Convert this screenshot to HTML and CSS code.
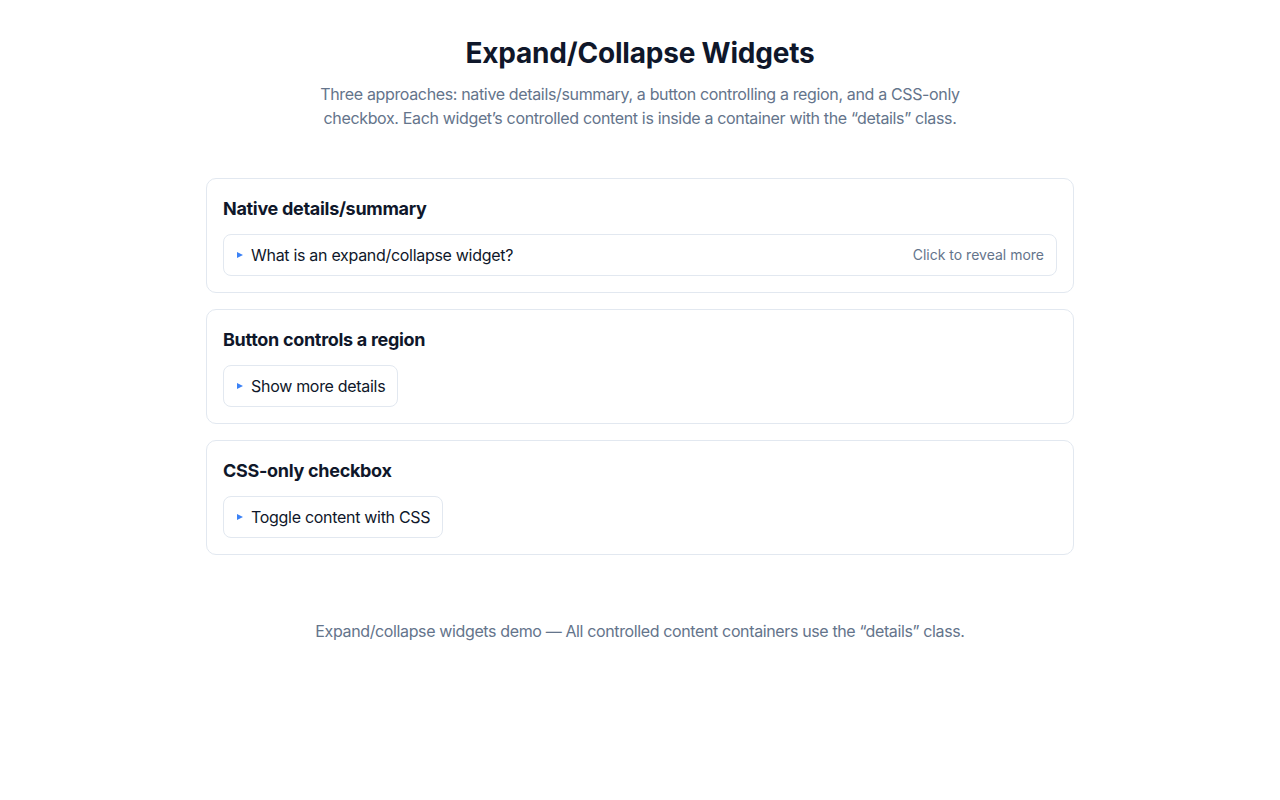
FILE: index.html
```html
<!DOCTYPE html>
<html lang="en">
<head>
<meta charset="utf-8">
<title>Expand/Collapse Widgets</title>
<link rel="stylesheet" href="styles.css">
</head>
<body>
<main class="page">
  <header class="intro">
    <h1 class="title">Expand/Collapse Widgets</h1>
    <p class="lead">Three approaches: native details/summary, a button controlling a region, and a CSS-only checkbox. Each widget’s controlled content is inside a container with the “details” class.</p>
  </header>

  <section class="card">
    <h2 class="card-title">Native details/summary</h2>
    <details class="native">
      <summary class="toggle toggle-wide">
        <span class="caret"></span>
        <span class="label">What is an expand/collapse widget?</span>
        <span class="hint">Click to reveal more</span>
      </summary>
      <div class="details">An expand/collapse widget shows or hides content on demand.</div>
    </details>
  </section>

  <section class="card">
    <h2 class="card-title">Button controls a region</h2>
    <button class="toggle" type="button" aria-expanded="false" aria-controls="region1">
      <span class="caret"></span>
      <span class="label">Show more details</span>
    </button>
    <div class="details" id="region1" hidden>Additional details revealed by the button.</div>
  </section>

  <section class="card">
    <h2 class="card-title">CSS-only checkbox</h2>
    <input class="cb" type="checkbox" id="cb1">
    <label class="toggle" for="cb1">
      <span class="caret"></span>
      <span class="label">Toggle content with CSS</span>
    </label>
    <div class="details cb-details">Content toggled with pure CSS.</div>
  </section>

  <footer class="foot">Expand/collapse widgets demo — All controlled content containers use the “details” class.</footer>
</main>
</body>
</html>
```

FILE: styles.css
```css
* { box-sizing: border-box; }
html, body { margin: 0; padding: 0; background: #ffffff; }
body {
  font-family: Inter, "Noto Sans", "Liberation Sans", sans-serif;
  color: #0f172a;
}
.page {
  width: 868px;
  margin: 0 auto;
  padding: 36px 0 40px;
  display: flex;
  flex-direction: column;
  gap: 16px;
}
.intro {
  text-align: center;
  margin-bottom: 32px;
}
.title {
  margin: 0;
  font-size: 28px;
  line-height: 34px;
  font-weight: 700;
  color: #0f172a;
  letter-spacing: -0.2px;
}
.lead {
  margin: 12px auto 0;
  max-width: 662px;
  font-size: 16px;
  line-height: 24px;
  color: #64748b;
  letter-spacing: -0.35px;
}
.card {
  border: 1px solid #e2e8f0;
  border-radius: 10px;
  padding: 16px;
  background: #fff;
}
.card-title {
  margin: 0 0 12px;
  font-size: 18px;
  line-height: 27px;
  font-weight: 700;
  color: #0f172a;
  letter-spacing: -0.3px;
}
.native summary { list-style: none; }
.native summary::-webkit-details-marker { display: none; }
.toggle {
  display: inline-flex;
  align-items: center;
  gap: 8px;
  padding: 8px 12px;
  border: 1px solid #e2e8f0;
  border-radius: 8px;
  background: #fff;
  font-family: inherit;
  font-size: 16px;
  line-height: 24px;
  color: #0f172a;
  letter-spacing: -0.3px;
  cursor: pointer;
  margin: 0;
}
.toggle-wide { display: flex; }
.caret {
  width: 0;
  height: 0;
  margin-left: 1px;
  border-top: 3.5px solid transparent;
  border-bottom: 3.5px solid transparent;
  border-left: 6px solid #3b82f6;
}
.hint {
  margin-left: auto;
  font-size: 14px;
  color: #64748b;
  letter-spacing: 0;
}
.details { display: none; }
.cb { position: absolute; opacity: 0; pointer-events: none; }
.cb:checked ~ .cb-details { display: block; }
.foot {
  margin-top: 48px;
  text-align: center;
  font-size: 16px;
  line-height: 24px;
  color: #64748b;
  letter-spacing: -0.37px;
}
```
